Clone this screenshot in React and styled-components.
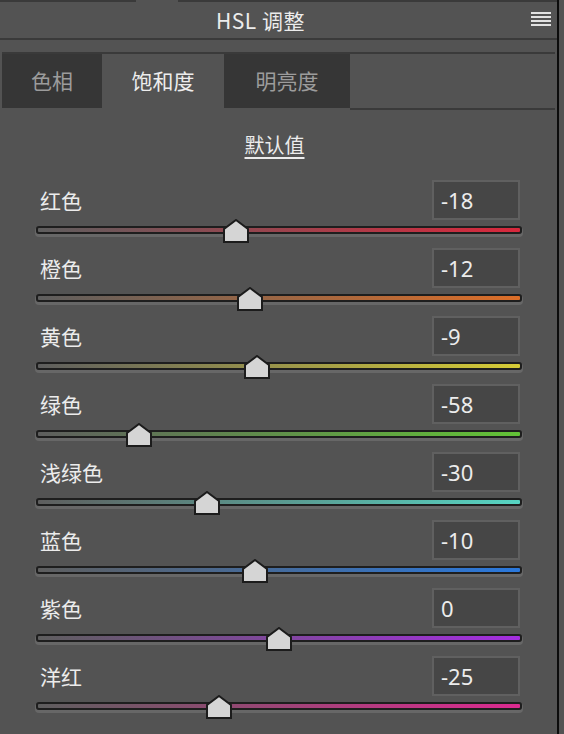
import React from 'react';
import styled, { createGlobalStyle } from 'styled-components';

const GlobalStyle = createGlobalStyle`
  html, body { margin: 0; padding: 0; background: #535353; }
  body {
    font-family: "Noto Sans CJK SC", "Noto Sans", "Liberation Sans", sans-serif;
    -webkit-font-smoothing: antialiased;
  }
`;

const Panel = styled.div`
  width: 559px;
  min-height: 734px;
  background: #535353;
  border-right: 2px solid #0c0c0c;
  box-sizing: border-box;
  overflow: hidden;
`;

const TopStrip = styled.div`
  display: flex;
  height: 2px;
`;

const StripPart = styled.div`
  background: ${({ gap }) => (gap ? 'transparent' : '#3a3a3a')};
  width: ${({ w }) => (w ? `${w}px` : 'auto')};
  flex: ${({ w }) => (w ? 'none' : 1)};
`;

const Header = styled.div`
  position: relative;
  height: 36px;
  display: flex;
  align-items: center;
  justify-content: center;
  padding-right: 36px;
  border-bottom: 2px solid #3a3a3a;
  color: #ececec;
  font-size: 21px;
  letter-spacing: 0.5px;
`;

const Burger = styled.div`
  position: absolute;
  right: 6px;
  top: 10px;
  width: 20px;
  display: flex;
  flex-direction: column;
  gap: 2px;
`;

const BurgerBar = styled.span`
  display: block;
  height: 2px;
  background: #e2e2e2;
`;

const TabBar = styled.div`
  display: flex;
  margin: 12px 2px 0 2px;
  border-top: 2px solid #3a3a3a;
`;

const Tab = styled.div`
  height: 54px;
  width: ${({ w }) => w}px;
  display: flex;
  align-items: center;
  justify-content: center;
  font-size: 21px;
  background: ${({ active }) => (active ? '#535353' : '#363636')};
  color: ${({ active }) => (active ? '#ededed' : '#9c9c9c')};
  box-sizing: border-box;
  padding-bottom: 2px;
`;

const TabFill = styled.div`
  flex: 1;
  height: 54px;
  border-bottom: 2px solid #3a3a3a;
`;

const Content = styled.div`
  padding: 21px 0 0 36px;
`;

const DefaultLink = styled.div`
  text-align: center;
  padding-right: 44px;
  font-size: 20px;
  color: #ececec;
  line-height: 28px;
  height: 49px;

  span {
    text-decoration: underline;
    text-underline-offset: 4px;
    text-decoration-thickness: 2px;
  }
`;

const Row = styled.div`
  width: 486px;
  height: 68px;
`;

const RowTop = styled.div`
  display: flex;
  align-items: center;
  justify-content: space-between;
  height: 40px;
`;

const Label = styled.div`
  padding-left: 4px;
  font-size: 21px;
  color: #ececec;
`;

const ValueBox = styled.div`
  width: 88px;
  height: 40px;
  box-sizing: border-box;
  border: 2px solid #606060;
  background: #464646;
  color: #ececec;
  font-family: "Noto Sans", "Liberation Sans", sans-serif;
  font-size: 22px;
  display: flex;
  align-items: center;
  padding-left: 7px;
  margin-right: 2px;
`;

const Track = styled.div`
  position: relative;
  margin-top: 6px;
  height: 4px;
  border: 2px solid #1e1e1e;
  border-radius: 3px;
  background: linear-gradient(to right, #5e5e5e, ${({ color }) => color});
  box-shadow: 0 2px 0 1px #676767;
`;

const Thumb = styled.svg`
  position: absolute;
  top: -9px;
  width: 26px;
  height: 24px;
  margin-left: -13px;
`;

const rows = [
  { label: '红色', value: -18, color: '#d8283c' },
  { label: '橙色', value: -12, color: '#dc6e28' },
  { label: '黄色', value: -9, color: '#d6cc36' },
  { label: '绿色', value: -58, color: '#62c236' },
  { label: '浅绿色', value: -30, color: '#56d4c2' },
  { label: '蓝色', value: -10, color: '#2a78dc' },
  { label: '紫色', value: 0, color: '#a42ee0' },
  { label: '洋红', value: -25, color: '#dc2a90' },
];

function SliderRow({ label, value, color }) {
  const pct = ((value + 100) / 200) * 100;
  return (
    <Row>
      <RowTop>
        <Label>{label}</Label>
        <ValueBox>{value}</ValueBox>
      </RowTop>
      <Track color={color}>
        <Thumb viewBox="0 0 26 24" style={{ left: `${pct}%` }}>
          <path d="M1 23 V10 L13 1 L25 10 V23 Z" fill="#d5d5d5" stroke="#1c1c1c" strokeWidth="2" strokeLinejoin="miter" />
        </Thumb>
      </Track>
    </Row>
  );
}

export default function App() {
  return (
    <>
      <GlobalStyle />
      <Panel>
        <TopStrip>
          <StripPart w={136} />
          <StripPart w={42} gap />
          <StripPart />
        </TopStrip>
        <Header>
          HSL 调整
          <Burger>
            <BurgerBar />
            <BurgerBar />
            <BurgerBar />
            <BurgerBar />
          </Burger>
        </Header>
        <TabBar>
          <Tab w={100}>色相</Tab>
          <Tab w={122} active>饱和度</Tab>
          <Tab w={126}>明亮度</Tab>
          <TabFill />
        </TabBar>
        <Content>
          <DefaultLink><span>默认值</span></DefaultLink>
          {rows.map((r) => (
            <SliderRow key={r.label} {...r} />
          ))}
        </Content>
      </Panel>
    </>
  );
}
